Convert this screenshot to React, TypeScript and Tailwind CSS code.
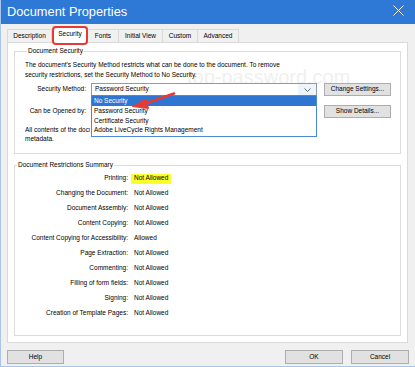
const restrictions: [string, string][] = [
  ["Printing:", "Not Allowed"],
  ["Changing the Document:", "Not Allowed"],
  ["Document Assembly:", "Not Allowed"],
  ["Content Copying:", "Not Allowed"],
  ["Content Copying for Accessibility:", "Allowed"],
  ["Page Extraction:", "Not Allowed"],
  ["Commenting:", "Not Allowed"],
  ["Filling of form fields:", "Not Allowed"],
  ["Signing:", "Not Allowed"],
  ["Creation of Template Pages:", "Not Allowed"],
];

const tabs = ["Description", "Security", "Fonts", "Initial View", "Custom", "Advanced"];
const tabWidths = ["w-[45px]", "w-[36px]", "w-[31px]", "w-[44px]", "w-[35px]", "w-[41px]"];

const Button = ({ label, className = "" }: { label: string; className?: string }) => (
  <div
    className={`flex items-center justify-center border border-[#adadad] bg-[#e1e1e1] ${className}`}
  >
    {label}
  </div>
);

const App = () => {
  return (
    <div className="relative flex h-[367px] w-[415px] flex-col overflow-hidden border-b border-l border-[#a9c6ea] bg-[#f0f0f0] font-['Liberation_Sans',Arial,sans-serif] text-[6.5px] leading-none text-black">
      {/* title bar */}
      <div className="flex h-[24px] shrink-0 items-center justify-between bg-[#2d79d5] pl-[6px] pr-[11px]">
        <span className="text-[12.8px] text-white">Document Properties</span>
        <svg width="11" height="11" viewBox="0 0 11 11" className="mt-[-3px]">
          <path d="M0.5 0.5 L10.5 10.5 M10.5 0.5 L0.5 10.5" stroke="white" strokeWidth="1" />
        </svg>
      </div>

      {/* tabs */}
      <div className="ml-[6px] flex h-[18px] shrink-0 items-end">
        {tabs.map((t, i) =>
          t === "Security" ? (
            <div
              key={t}
              className={`relative z-10 mb-[-1px] flex h-[17px] items-center justify-center border-x border-t border-[#d9d9d9] bg-white pb-[1px] ${tabWidths[i]}`}
            >
              {t}
              <div className="absolute -inset-x-[1px] -top-[1px] -bottom-[2px] rounded-[4px] border-[2.5px] border-[#e63a33]" />
            </div>
          ) : (
            <div
              key={t}
              className={`flex h-[13px] items-center justify-center border-t border-r border-[#d9d9d9] first:border-l ${tabWidths[i]}`}
            >
              {t}
            </div>
          )
        )}
      </div>

      {/* panel */}
      <div className="ml-[6px] flex h-[301px] w-[401px] shrink-0 flex-col border border-[#d9d9d9] bg-white px-[6px] pt-[4px]">
        <fieldset className="relative border border-[#dcdcdc] pb-[10px] pl-[10px]">
          <legend className="ml-[2px] px-[1px] leading-[8px]">Document Security</legend>
          <div className="pointer-events-none absolute left-[172px] top-[12px] text-[20px] leading-none text-[#f0f0f0]">
            top-password.com
          </div>
          <div className="relative pt-[5px] leading-[9.5px]">
            <div>The document's Security Method restricts what can be done to the document. To remove</div>
            <div>security restrictions, set the Security Method to No Security.</div>
          </div>
          <div className="relative mt-[4px] flex h-[13px] items-center">
            <div className="w-[61px] text-right">Security Method:</div>
            <div className="relative ml-[5px] flex h-[13px] w-[226px] items-center border border-[#8a9bb0] bg-white">
              <span className="pl-[3px]">Password Security</span>
              <div className="ml-auto flex h-full w-[18px] items-center justify-center bg-[#eef4fb]">
                <svg width="7" height="4" viewBox="0 0 7 4">
                  <path d="M0.5 0.5 L3.5 3.5 L6.5 0.5" stroke="#444" strokeWidth="0.8" fill="none" />
                </svg>
              </div>
              <div className="absolute left-[-1px] top-full z-20 flex w-[226px] flex-col border border-[#4a88d8] bg-white">
                <div className="flex h-[10px] items-center bg-[#2f76d2] pl-[2px] text-white">No Security</div>
                <div className="flex h-[10px] items-center pl-[2px]">Password Security</div>
                <div className="flex h-[9.5px] items-center pl-[2px]">Certificate Security</div>
                <div className="flex h-[10px] items-center pl-[2px]">Adobe LiveCycle Rights Management</div>
              </div>
            </div>
            <Button label="Change Settings..." className="relative z-10 ml-[7px] h-[13px] w-[67px]" />
          </div>
          <div className="mt-[9px] flex h-[13px] items-center">
            <div className="w-[61px] text-right">Can be Opened by:</div>
            <div className="ml-[5px] w-[226px]" />
            <Button label="Show Details..." className="ml-[7px] h-[13px] w-[67px]" />
          </div>
          <div className="mt-[7px] leading-[9px]">
            <div className="w-[65px] overflow-hidden whitespace-nowrap">All contents of the document are encrypted</div>
            <div>metadata.</div>
          </div>
          <svg
            width="50"
            height="20"
            viewBox="0 0 50 20"
            className="pointer-events-none absolute left-[116px] top-[36px] z-30"
          >
            <path d="M13 13 L43 2.5" stroke="#e63a33" strokeWidth="2.6" strokeLinecap="round" />
            <path d="M1.5 15.5 L15 8 L17.5 17.5 Z" fill="#e63a33" stroke="#e63a33" strokeWidth="1" strokeLinejoin="round" />
          </svg>
        </fieldset>

        <fieldset className="mt-[7px] border border-[#dcdcdc] pb-[14px] pt-[2px]">
          <legend className="ml-[2px] px-[1px] leading-[8px]">Document Restrictions Summary</legend>
          <div className="grid grid-cols-[113px_1fr] gap-x-[6px]">
            {restrictions.map(([label, value], i) => (
              <div key={label} className="contents">
                <div className="flex h-[15px] items-center justify-end">{label}</div>
                <div className="flex h-[15px] items-center">
                  <span
                    className={
                      i === 0
                        ? "-ml-[3px] flex h-[10px] items-center bg-[#fbff2c] px-[3px]"
                        : ""
                    }
                  >
                    {value}
                  </span>
                </div>
              </div>
            ))}
          </div>
        </fieldset>
      </div>

      {/* bottom buttons */}
      <div className="mt-[7px] flex pl-[6px] pr-[6px]">
        <Button label="Help" className="h-[14px] w-[57px]" />
        <Button label="OK" className="ml-auto h-[14px] w-[58px] border-[#2a7ad6]" />
        <Button label="Cancel" className="ml-[8px] h-[14px] w-[58px]" />
      </div>
    </div>
  );
};

export default App;
